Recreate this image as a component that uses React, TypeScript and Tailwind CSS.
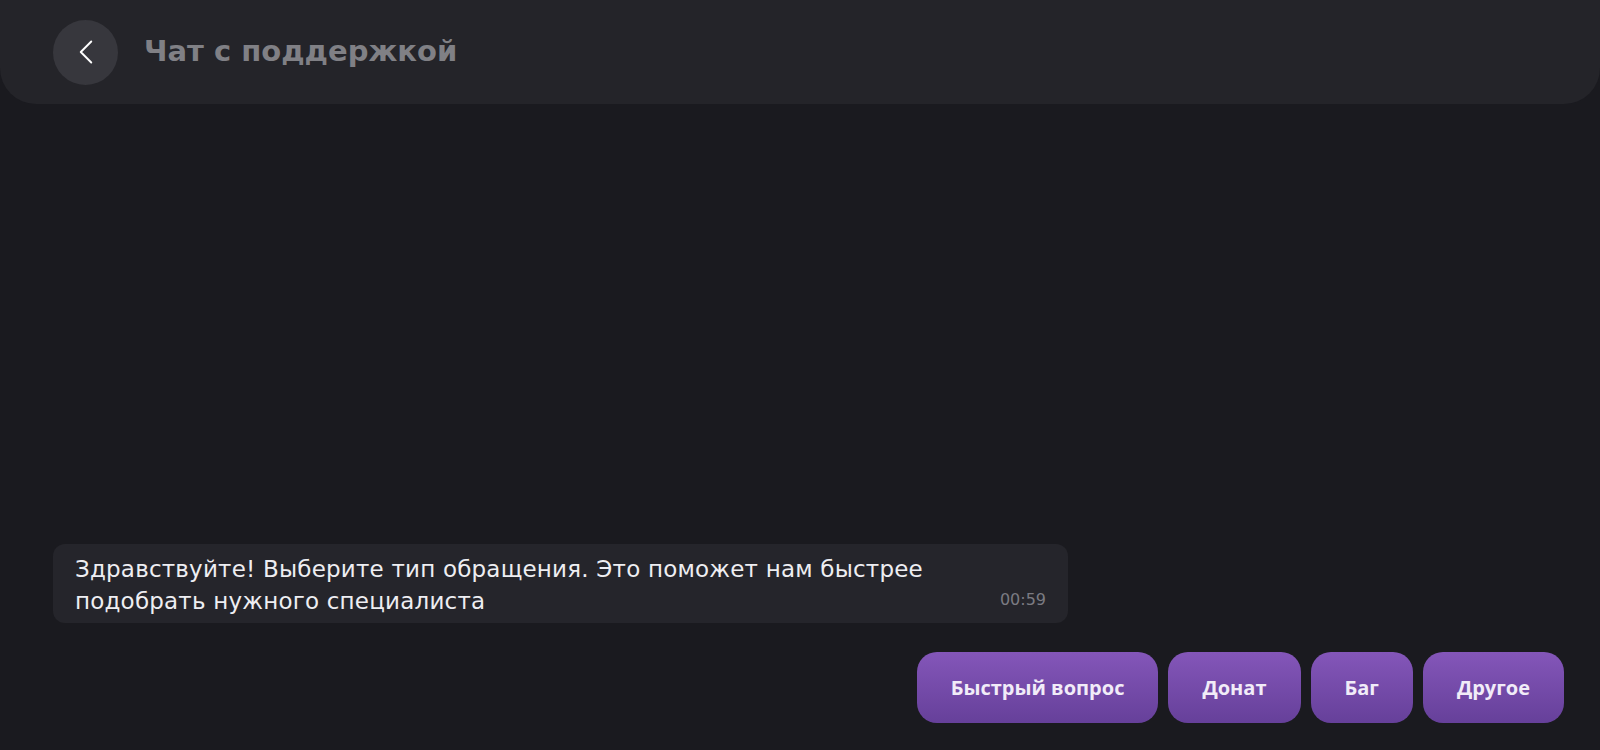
import { ChevronLeft } from "lucide-react";

const options = ["Быстрый вопрос", "Донат", "Баг", "Другое"];

export default function App() {
  return (
    <div className="flex h-[750px] w-full flex-col bg-[#1a1a1f] font-['Open_Sans','Noto_Sans',sans-serif]">
      <header className="flex h-[104px] shrink-0 items-center gap-[26px] rounded-b-[36px] bg-[#242429] pl-[53px]">
        <button className="flex h-[65px] w-[65px] items-center justify-center rounded-full bg-[#37373d] text-white">
          <ChevronLeft size={42} strokeWidth={1.1} />
        </button>
        <h1 className="font-['DejaVu_Sans',sans-serif] text-[29px] font-bold text-[#808085]">
          Чат с поддержкой
        </h1>
      </header>

      <main className="flex flex-1 flex-col justify-end px-[36px] pb-[27px] pl-[53px]">
        <div className="relative w-[1015px] rounded-[12px] bg-[#25252b] px-[22px] pb-[6px] pt-[9px]">
          <p className="font-['DejaVu_Sans',sans-serif] text-[23px] leading-[32px] tracking-[0.2px] text-[#eeeef2]">
            Здравствуйте! Выберите тип обращения. Это поможет нам быстрее
            <br />
            подобрать нужного специалиста
          </p>
          <span className="absolute bottom-[11px] right-[22px] font-['DejaVu_Sans',sans-serif] text-[16px] text-[#7b7b82]">
            00:59
          </span>
        </div>

        <div className="mt-[29px] flex justify-end gap-[10px]">
          {options.map((label) => (
            <button
              key={label}
              className="h-[71px] rounded-[20px] bg-gradient-to-b from-[#8456b9] to-[#66409a] px-[34px] text-[20px] font-bold text-[#f1ecf8]"
            >
              {label}
            </button>
          ))}
        </div>
      </main>
    </div>
  );
}
